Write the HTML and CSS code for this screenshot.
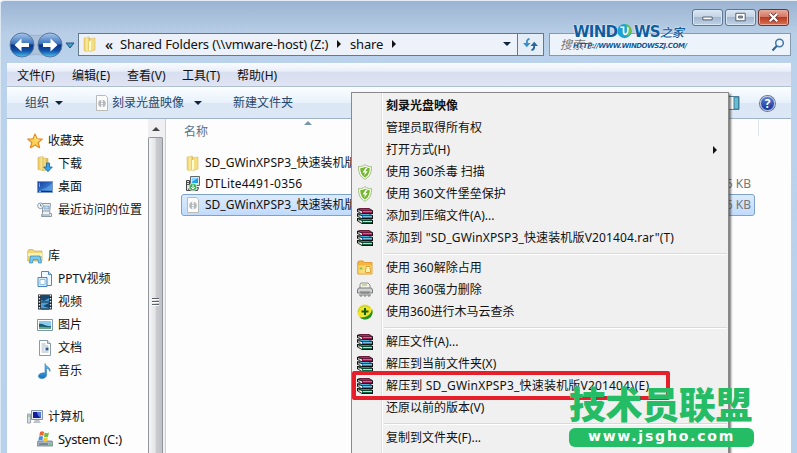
FILE: index.html
```html
<!DOCTYPE html>
<html lang="zh-CN">
<head>
<meta charset="utf-8">
<title>share</title>
<link rel="stylesheet" href="styles.css">
</head>
<body>
<svg class="defs" aria-hidden="true">
  <defs>
    <linearGradient id="gold" x1="0" x2="1"><stop offset="0" stop-color="#e9c558"/><stop offset=".5" stop-color="#fcf0a8"/><stop offset="1" stop-color="#d9ae3c"/></linearGradient>
    <linearGradient id="orb" x1="0" y1="0" x2="0" y2="1"><stop offset="0" stop-color="#a9c8ea"/><stop offset=".45" stop-color="#3a73bf"/><stop offset=".5" stop-color="#0c3384"/><stop offset=".75" stop-color="#1255ab"/><stop offset="1" stop-color="#4bc6f3"/></linearGradient>
    <linearGradient id="sky" x1="0" y1="0" x2="1" y2="1"><stop offset="0" stop-color="#123c9c"/><stop offset="1" stop-color="#4d9ae8"/></linearGradient>
    <linearGradient id="blue" x1="0" y1="0" x2="0" y2="1"><stop offset="0" stop-color="#69c4f4"/><stop offset="1" stop-color="#1373be"/></linearGradient>
    <symbol id="folder" viewBox="0 0 16 16"><path d="M2 2l5-1 1 1v13l-5 .5-1-1z" fill="url(#gold)" stroke="#e2c671" stroke-width=".6"/><path d="M8 3l5-1v12l-5 1.500z" fill="#f5de80" stroke="#d9b95b" stroke-width=".6"/><path d="M7 5l2-.5v10l-2 .5z" fill="#fffbd5"/></symbol>
    <symbol id="disc" viewBox="0 0 16 16"><path d="M2.500.5h9l2 2v13h-11z" fill="#fbfbfa" stroke="#b9bbb8"/><circle cx="8" cy="8.500" r="3.800" fill="#b4babd"/><circle cx="8" cy="8.500" r="1.500" fill="#fff" stroke="#8f989d" stroke-width=".6"/><path d="M8 4.500v2.500M8 10v2.500" stroke="#fff" stroke-width="1.500"/></symbol>
    <symbol id="star" viewBox="0 0 16 16"><path d="M8 1l2 4.800 5.300.3-4.100 3.400 1.400 5.200L8 11.900l-4.600 2.800 1.400-5.200L.7 6.100 6 5.800z" fill="#ffd25a" stroke="#e98b1c" stroke-width="1.200" stroke-linejoin="round"/><path d="M8 3.500l1 3.200 3 .5" fill="none" stroke="#fff3b1"/></symbol>
    <symbol id="download" viewBox="0 0 16 16"><path d="M1 1.500l5-1v14l-5-1zM6 2l5 .5V14l-5 .5z" fill="url(#gold)" stroke="#d9b95b" stroke-width=".7"/><path d="M9.500 7h3v4h2.800L11 15.700 6.700 11h2.800z" fill="#36a2e8" stroke="#1261aa" stroke-width=".8"/></symbol>
    <symbol id="desktop" viewBox="0 0 16 16"><path d="M.5 2.500h15v11H.5z" fill="url(#sky)" stroke="#7c9bbd"/><path d="M1 11c6 0 10-3 14-7v7z" fill="#69b3ee" opacity=".5"/><path d="M1 12.500h14" stroke="#183354"/><path d="M2 12.500h2" stroke="#77cc6c"/><path d="M2 5h1M2 7h1" stroke="#e9f4ff"/></symbol>
    <symbol id="recent" viewBox="0 0 16 16"><path d="M5.500 1.500h8l-1 10h2v3h-10l1-3z" fill="#edf2f7" stroke="#8b99a6"/><path d="M7 4h5v3H7z" fill="#c0d7ee" stroke="#6689a9" stroke-width=".6"/><path d="M6 9h6M4 13h9" stroke="#8794a1"/><circle cx="3.500" cy="3.800" r="2.800" fill="#f6f9fb" stroke="#8a99a8"/><path d="M3.500 2v2h1.500" fill="none" stroke="#51677a" stroke-width=".7"/></symbol>
    <symbol id="library" viewBox="0 0 16 16"><path d="M.8 3l1-1.500h4L7 3h8v10H.8z" fill="#f1d77a" stroke="#cda94b" stroke-width=".7"/><path d="M1 5h14v3H1z" fill="#fff2af"/><path d="M2.500 15L3.500 8h9.500l1.500 7H11.500l-.5-3.300H6L5.500 15z" fill="#7ac7ed" stroke="#318bbc" stroke-width=".7"/></symbol>
    <symbol id="pptv" viewBox="0 0 16 16"><path d="M4.500.5h7l3 3v11h-10z" fill="#eff8ff" stroke="#5488b6"/><path d="M11.500.5v3h3" fill="#b4daf4" stroke="#5488b6"/><path d="M1 6.500h9v9H1z" fill="#d6edfc" stroke="#4987ba"/><path d="M3 8.500h5v5H3z" fill="#fff" stroke="#7eb1d8" stroke-width=".8"/></symbol>
    <symbol id="video" viewBox="0 0 16 16"><path d="M1 .5h14v15H1z" fill="#202b35"/><path d="M4 1h8v14H4z" fill="#4b9fd4"/><path d="M4 1h8v3L7 7 4 6zM12 9v5l-6-2z" fill="#184770"/><path d="M4 8h8M4 15h8" stroke="#142737"/><path d="M2.500 1v14M13.500 1v14" stroke="#e4ecf1" stroke-width="1.400" stroke-dasharray="1.500 1.500"/></symbol>
    <symbol id="picture" viewBox="0 0 16 16"><path d="M.5 2.500h15v11H.5z" fill="#fff" stroke="#7c98ad"/><path d="M2 4h12v8H2z" fill="#8bcbf0"/><path d="M2 7c4-1 7 3 12 2v3H2z" fill="#175d74"/><path d="M2 10c4-1 8 1 12 0v2H2z" fill="#68a982"/></symbol>
    <symbol id="document" viewBox="0 0 16 16"><path d="M2.500.5h8l3 3v12h-11z" fill="#fff" stroke="#889baa"/><path d="M10.500.5v3h3" fill="#d8e5ef" stroke="#889baa"/><path d="M4.500 4h4M4.500 6h7M4.500 8h3M4.500 10h3M4.500 12h7" stroke="#9db4c8"/><path d="M8.500 7.500h3v3h-3z" fill="#335d87"/></symbol>
    <symbol id="music" viewBox="0 0 16 16"><path d="M8 .5c.5 3 6 3.500 5 8-.5-2-2.300-3-3.500-3.300V12c0 2-2 3.500-4.500 3.500-3 0-4-1.500-3.500-3C2 10.500 5.500 9.500 8 10z" fill="url(#blue)" stroke="#2c7fbb" stroke-width=".6"/></symbol>
    <symbol id="computer" viewBox="0 0 16 16"><path d="M.5 5h3v9h-3z" fill="#d8dcde" stroke="#8b969f" stroke-width=".8"/><path d="M4.500 1.500h11v9h-11z" fill="#e8edf0" stroke="#8295aa"/><path d="M6 3h8v6H6z" fill="#141e9b"/><path d="M10 3h4v6C12 8 10 6 10 3" fill="#527bdf"/><path d="M8 11h4l2 3H6z" fill="#bdc4c9"/><path d="M1 7h2" stroke="#5fb56b"/></symbol>
    <symbol id="drive" viewBox="0 0 16 16"><path d="M1 10h14l.8 2v3H.2v-3z" fill="#aab6bd" stroke="#5d707e" stroke-width=".7"/><path d="M2 13h9" stroke="#485c67"/><path d="M12 13h2" stroke="#45d767" stroke-width="1.500"/><path d="M3 1c2-1 3-1 4 0L6.300 5c-1-1-2.500-1-4 0z" fill="#ed6330"/><path d="M7.600 1.500c2 1 3 .7 4.400 0L11 5.700c-1.500.8-3 .5-4 0z" fill="#78b73a"/><path d="M2 5.700c2-1 3-.8 4 0l-.6 4c-1-1-2.600-1-4 0z" fill="#448ede"/><path d="M6.700 6.300c2 .8 3 .7 4.200 0l-.7 4c-1.500.8-3 .7-4.200 0z" fill="#f5c635"/></symbol>
    <symbol id="setup" viewBox="0 0 16 16"><path d="M5.500.5h9v9h-9z" fill="#e1e2df" stroke="#626669"/><path d="M7 2h6v5H7z" fill="#1da0e2"/><path d="M7 2h6L7 6z" fill="#85d7ff"/><path d="M1.500 4.500h3v10h-3z" fill="#e5e5e1" stroke="#444"/><path d="M2 6.500h2M2 8.500h2" stroke="#555"/><path d="M4.500 11.500h9l-1 3h-9z" fill="#d5d8ce" stroke="#444"/><circle cx="8" cy="11" r="3.800" fill="#3caf56" stroke="#eef7ed" stroke-width=".7"/><path d="M8 8.500v4.500M6 11l2 2 2-2" fill="none" stroke="#fff"/></symbol>
    <symbol id="shield" viewBox="0 0 16 16"><path d="M8 .7c2 1.500 4 2 6.500 2 0 6-1.500 10-6.500 12.600C3 12.700 1.500 8.700 1.500 2.700 4 2.700 6 2.200 8 .7z" fill="#f8fbef" stroke="#a3bd82"/><path d="M8 2.700c1.500 1 3 1.400 4.800 1.500-.2 4.500-1.500 7.300-4.800 9.300-3.300-2-4.600-4.800-4.800-9.300C5 4.100 6.500 3.700 8 2.700z" fill="#71b82b"/><path d="M8.500 4L5.500 8.500H8L7 12l3.700-4.700H8.300L10.500 4z" fill="#fff"/></symbol>
    <symbol id="rar" viewBox="0 0 16 16">
      <path d="M0 10l11 0 5 2v4H5l-5-3z" fill="#111"/><path d="M1 10.500h10l4 1.500H5z" fill="#239c78"/><path d="M1 11.300l4 1.700v2l-4-2z" fill="#eef0df"/><path d="M5 12.500h10v2.300H5z" fill="#078058"/><path d="M6 13.500h9" stroke="#d5ffea" stroke-width=".8"/>
      <path d="M0 5.300h11l5 2V11H5L0 8.500z" fill="#111"/><path d="M1 5.700h10l4 1.600H5z" fill="#44b8d8"/><path d="M1 6.500l4 1.800v2l-4-2z" fill="#f1efe5"/><path d="M5 7.600h10v2.400H5z" fill="#2862ad"/><path d="M6 8.700h9" stroke="#a6eeff" stroke-width=".8"/>
      <path d="M0 1L3 0h9l4 2.500V6H5L0 3.800z" fill="#181018"/><path d="M3 .5h8.500l3.500 2H5L1.500 1z" fill="#c02460"/><path d="M1 1.700L5 3.500v1.800L1 3.600z" fill="#f5efe9"/><path d="M5 3h10v2.200H5z" fill="#970f43"/><path d="M6 3.600h9" stroke="#f598b8" stroke-width=".7"/>
      <path d="M2 2.200v2M2 7v1.800M2 11.800v1.800" stroke="#3a3131" stroke-width=".8"/>
    </symbol>
    <symbol id="unlock" viewBox="0 0 16 16"><path d="M.8 2l1-1H6l1.500 1.500H15V14H.8z" fill="#f7b53d" stroke="#e39c30"/><path d="M1.500 5.500h13v8h-13z" fill="#ffdb76"/><path d="M9 9V6.500h4V9h.5v3.500H8.500V9z" fill="#fff4b6" stroke="#e0a63a"/><path d="M2.500 7.500h3v2h-3z" fill="#8ac24d"/></symbol>
    <symbol id="shredder" viewBox="0 0 16 16"><path d="M4 1h7l2 2v4H3V2z" fill="#f4f3e9" stroke="#8d918c"/><path d="M5 3h5" stroke="#a2b26c"/><path d="M1.500 6h13l1 2v3H.5V8z" fill="#d0d2d2" stroke="#777b7c"/><path d="M3 10h10" stroke="#6d7274"/><path d="M3 12v2h2v-3m2 0v3h2v-3m2 0v3h2v-2" fill="none" stroke="#777"/></symbol>
    <symbol id="plus" viewBox="0 0 16 16"><circle cx="8" cy="8" r="7.600" fill="#f0e32a"/><path d="M2.500 13.200A7.600 7.600 0 0 0 15 5C14.500 11 8 14.500 2.500 13.200" fill="#1f8e25"/><path d="M1 8a7 7 0 0 1 12-4" fill="none" stroke="#b9d03a" stroke-width="1"/><path d="M8 4v7M4.500 7.500h7" stroke="#145c10" stroke-width="2"/></symbol>
  </defs>
</svg>

<main class="window">
  <header class="titlebar">
    <nav class="nav">
      <svg class="orbs" viewBox="0 0 70 28"><path d="M14 2.500q14 4 28 0v23q-14-4-28 0z" fill="#a3b8d0" stroke="#8ba3bf" opacity=".6"/><circle cx="14" cy="14" r="12" fill="url(#orb)" stroke="#5b789f"/><circle cx="42" cy="14" r="12" fill="url(#orb)" stroke="#5b789f"/><path d="M6.500 14l7-6.500v4.500h7.500v4h-7.500v4.500z" fill="#fff"/><path d="M49.500 14l-7-6.500v4.500h-7.500v4h7.500v4.500z" fill="#fff"/><path d="M58 12h8l-4 5z" fill="#459bc6" stroke="#1e5685"/></svg>
    </nav>
    <div class="address">
      <svg class="icon wide"><use href="#folder"/></svg>
      <span class="chev">«</span>
      <span class="crumb">Shared Folders (\\vmware-host) (Z:)</span>
      <i class="tri-right"></i>
      <span class="crumb share">share</span>
      <i class="tri-right"></i>
      <i class="tri-down push"></i>
    </div>
    <div class="refresh"><svg viewBox="0 0 16 14"><path d="M7 1Q3.800 1.500 4 6" fill="none" stroke="#3b8cc4" stroke-width="2"/><path d="M0 5.500h8L4 10z" fill="#3b8cc4"/><path d="M9 13q3.200-.5 3-5" fill="none" stroke="#28679d" stroke-width="2"/><path d="M8 8.500h8L12 4z" fill="#28679d"/></svg></div>
    <div class="search"><span>搜索 s</span><svg viewBox="0 0 14 14"><circle cx="8.500" cy="5" r="3.800" fill="#edf6ff" stroke="#4377a8" stroke-width="1.500"/><path d="M5.700 8L1.500 12.500" stroke="#32638f" stroke-width="2"/></svg></div>
  </header>
  <div class="controls">
    <span class="ctl"><svg viewBox="0 0 30 16"><path d="M10 7.500h10v3H10z" fill="#fff" stroke="#4d5968"/></svg></span>
    <span class="ctl"><svg viewBox="0 0 30 16"><path d="M10 3.500h10v8H10z" fill="#fff" stroke="#4d5968"/><path d="M13 6.500h4v2h-4z" fill="#adc0d5" stroke="#4d5968"/></svg></span>
    <span class="ctl close"><svg viewBox="0 0 30 16"><path d="M11 4l8 8M19 4l-8 8" stroke="#5b2a2a" stroke-width="4"/><path d="M11 4l8 8M19 4l-8 8" stroke="#fff" stroke-width="2.500"/></svg></span>
  </div>
  <div class="brand">
    <div class="brand-name"><b>WIND</b><svg viewBox="0 0 16 16"><circle cx="8" cy="8" r="7.600" fill="#1aa3d4"/><path d="M8 .4A7.600 7.600 0 0 1 15.600 8C15 11 13 13 10 13.500 14 9 12 4 8 .4" fill="#6cc24a"/><path d="M3.500 4h3.500v5q0 2.500 2 2.500T11.500 8V4" fill="none" stroke="#fff" stroke-width="1.800"/></svg><b class="ws">WS</b><i>之家</i></div>
    <div class="brand-url">HTTP://WWW.WINDOWSZJ.COM/</div>
  </div>

  <nav class="menubar"><span>文件(F)</span><span>编辑(E)</span><span>查看(V)</span><span>工具(T)</span><span>帮助(H)</span></nav>
  <div class="toolbar">
    <span>组织</span><i class="tri-down t1"></i>
    <svg class="icon"><use href="#disc"/></svg><span>刻录光盘映像</span><i class="tri-down t2"></i>
    <span>新建文件夹</span>
    <svg class="pane push" viewBox="0 0 14 14"><path d="M.5.500h13v13H.5z" fill="#fff" stroke="#567f9c"/><path d="M8.500 1h4.500v12H8.500z" fill="#64bdd2" stroke="#3f7f99"/></svg>
    <span class="help">?</span>
  </div>

  <section class="body">
    <aside class="tree">
      <div class="node root"><svg class="icon"><use href="#star"/></svg>收藏夹</div>
      <div class="node"><svg class="icon"><use href="#download"/></svg>下载</div>
      <div class="node"><svg class="icon"><use href="#desktop"/></svg>桌面</div>
      <div class="node"><svg class="icon"><use href="#recent"/></svg>最近访问的位置</div>
      <div class="node root spaced"><svg class="icon"><use href="#library"/></svg>库</div>
      <div class="node"><svg class="icon"><use href="#pptv"/></svg>PPTV视频</div>
      <div class="node"><svg class="icon"><use href="#video"/></svg>视频</div>
      <div class="node"><svg class="icon"><use href="#picture"/></svg>图片</div>
      <div class="node"><svg class="icon"><use href="#document"/></svg>文档</div>
      <div class="node"><svg class="icon"><use href="#music"/></svg>音乐</div>
      <div class="node root spaced"><svg class="icon"><use href="#computer"/></svg>计算机</div>
      <div class="node drive"><svg class="icon"><use href="#drive"/></svg>System (C:)</div>
    </aside>
    <div class="scroll"><i class="tri-up"></i><div class="thumb"><i></i><i></i><i></i></div></div>
    <div class="files">
      <div class="heading"><span>名称</span><i class="sort"></i><i class="col-end push"></i></div>
      <div class="file"><svg class="icon"><use href="#folder"/></svg><span class="fname">SD_GWinXPSP3_快速装机版</span></div>
      <div class="file"><svg class="icon"><use href="#setup"/></svg><span class="fname dt">DTLite4491-0356</span><span class="size">5 KB</span></div>
      <div class="file selected"><svg class="icon"><use href="#disc"/></svg><span class="fname">SD_GWinXPSP3_快速装机版</span><span class="size">6 KB</span></div>
    </div>
  </section>

  <div class="context">
    <div class="item"><b>刻录光盘映像</b></div>
    <div class="item"><span>管理员取得所有权</span></div>
    <div class="item"><span>打开方式(H)</span><i class="tri-right push"></i></div>
    <div class="item"><svg class="icon"><use href="#shield"/></svg><span>使用 360杀毒 扫描</span></div>
    <div class="item"><svg class="icon"><use href="#shield"/></svg><span>使用 360文件堡垒保护</span></div>
    <div class="item"><svg class="icon"><use href="#rar"/></svg><span>添加到压缩文件(A)...</span></div>
    <div class="item"><svg class="icon"><use href="#rar"/></svg><span class="add">添加到 "SD_GWinXPSP3_快速装机版V201404.rar"(T)</span></div>
    <hr>
    <div class="item"><svg class="icon"><use href="#unlock"/></svg><span>使用 360解除占用</span></div>
    <div class="item"><svg class="icon"><use href="#shredder"/></svg><span>使用 360强力删除</span></div>
    <div class="item"><svg class="icon"><use href="#plus"/></svg><span>使用360进行木马云查杀</span></div>
    <hr>
    <div class="item"><svg class="icon"><use href="#rar"/></svg><span>解压文件(A)...</span></div>
    <div class="item"><svg class="icon"><use href="#rar"/></svg><span>解压到当前文件夹(X)</span></div>
    <div class="item"><svg class="icon"><use href="#rar"/></svg><span class="extract">解压到 SD_GWinXPSP3_快速装机版V201404\(E)</span></div>
    <div class="item"><span>还原以前的版本(V)</span></div>
    <hr>
    <div class="item"><span>复制到文件夹(F)...</span></div>
  </div>
  <div class="marker"></div>
  <div class="stamp"><div class="stamp-name">技术员联盟</div><div class="stamp-url">www.jsgho.com</div></div>
</main>
</body>
</html>
```
FILE: styles.css
```css
* { box-sizing: border-box; }
body { margin: 0; overflow: hidden; font: 12px/20px "Noto Sans", "Noto Sans CJK SC", sans-serif; color: #111; }
.defs { position: absolute; width: 0; height: 0; }
.window { position: relative; width: 797px; height: 453px; overflow: hidden; padding: 0 6px 0 7px; background: linear-gradient(#9bb4d2 0, #b9cfe7 34px, #bad2ec 63px, #b9d1ea 100%); border-top: 1px solid #e4edf5; box-shadow: inset 1px 0 #dbe8f4; border-radius: 4px 0 0 0; display: flex; flex-direction: column; }
.icon { width: 16px; height: 16px; flex: none; }
.push { margin-left: auto !important; }
.titlebar { height: 62px; flex: none; display: flex; align-items: flex-start; padding-top: 32px; }
.nav { width: 70px; margin-left: 1px; }
.orbs { display: block; width: 70px; height: 28px; margin-top: -2px; }
.address { width: 440px; height: 23px; display: flex; align-items: center; background: #edf2fa; border: 1px solid #64798f; padding: 0 0 1px 3px; white-space: nowrap; font-size: 13px; }
.chev { width: 16px; margin-left: 3px; text-align: center; font-weight: 500; line-height: 16px; font-size: 15px; }
.crumb { margin-left: 3px; letter-spacing: -.16px; width: 208px; }
.share { width: 33px; margin-left: 9px; }
.tri-right { width: 0; height: 0; border: 4px solid transparent; border-left: 4px solid #111; border-right: 0; margin-left: 9px; }
.tri-down { width: 0; height: 0; border: 4px solid transparent; border-top: 4px solid #10243c; border-bottom: 0; margin-right: 6px; }
.refresh { width: 26px; height: 23px; border: 1px solid #64798f; border-left: 0; background: #e5edf7; display: grid; place-items: center; }
.refresh svg { width: 15px; height: 13px; }
.search { width: 242px; height: 23px; margin-left: 5px; border: 1px solid #8799ad; background: #edf3fb; display: flex; align-items: center; justify-content: space-between; padding: 0 5px 0 10px; font-style: italic; color: #777; }
.search svg { width: 14px; height: 14px; }
.controls { position: absolute; left: 692px; top: 8px; display: flex; gap: 2px; }
.ctl { width: 31px; height: 17px; border: 1px solid #60758f; border-radius: 3px; background: linear-gradient(#dce7f2, #c2d2e3 48%, #a4b9d1 50%, #bed2e7); box-shadow: inset 0 0 0 1px #d9e6f3; }
.ctl svg { display: block; width: 29px; height: 15px; }
.close { background: linear-gradient(#e6a99a, #d37562 48%, #bb3b20 50%, #d77255); border-color: #70352e; box-shadow: inset 0 0 0 1px #e9aa9b; }
.brand { position: absolute; left: 573px; top: 21px; color: #0e5d9f; }
.brand-name { display: flex; height: 19px; align-items: center; font: 15px/18px "DejaVu Sans", sans-serif; }
.brand-name b { width: 44px; letter-spacing: -.7px; text-shadow: 0 0 2px #fff, 0 0 1px #fff; }
.brand-name .ws { width: 26px; margin-left: 2px; }
.brand-name svg { width: 15px; height: 16px; margin-top: -2px; }
.brand-name i { font: italic 500 12px/18px "Noto Sans CJK SC", sans-serif; letter-spacing: -.3px; text-shadow: 0 0 2px #fff; }
.brand-url { font: italic bold 7px/8px "DejaVu Sans", sans-serif; letter-spacing: -.48px; white-space: nowrap; margin-top: 1px; text-shadow: 0 0 1px #fff, 0 0 2px #fff; }
.menubar { height: 24px; flex: none; display: flex; align-items: center; background: linear-gradient(#fafcff, #e9eef8 35%, #d7dff0 40%, #e0e4f3); border-bottom: 1px solid #aebfd2; padding-left: 10px; padding-top: 3px; }
.menubar span { width: 55px; letter-spacing: .03px; }
.toolbar { height: 32px; flex: none; display: flex; align-items: center; color: #29466b; background: linear-gradient(#fafdff, #e8f1fb 48%, #dce7f5 52%, #dce8f6); border-top: 1px solid #fff; border-bottom: 1px solid #9fb2c8; padding: 0 16px 0 18px; }
.t1 { margin: 0 31px 0 6px; }
.toolbar .icon { margin-right: 2px; }
.toolbar .t2 { margin: 0 31px 0 10px; }
.pane { width: 15px; height: 14px; margin-right: 20px; }
.help { width: 15px; height: 15px; border-radius: 50%; background: linear-gradient(#5b7fd0, #173397); border: 1px solid #aebbdc; box-shadow: 0 0 0 1px #65779d; color: #fff; font: bold 12px/13px "Open Sans", sans-serif; text-align: center; }
.body { flex: 1; min-height: 0; display: flex; background: #fdfdfe; }
.tree { width: 141px; padding-top: 10px; overflow: hidden; }
.node { height: 23px; display: flex; align-items: center; gap: 5px; padding-left: 30px; white-space: nowrap; }
.root { padding-left: 20px; }
.spaced { margin-top: 23px; }
.drive { font-size: 13px; letter-spacing: -.3px; line-height: 18px; padding-bottom: 2px; }
.scroll { width: 18px; display: flex; flex-direction: column; align-items: flex-start; background: #f0f0f2; border-right: 1px solid #c8d0db; }
.tri-up { width: 0; height: 0; border: 4px solid transparent; border-bottom: 4px solid #444; border-top: 0; margin: 8px 0 6px 4px; }
.thumb { flex: 1; width: 15px; border: 1px solid #93959b; border-bottom: 0; border-radius: 2px 2px 0 0; background: linear-gradient(90deg, #f5f5f6, #e3e4e6 48%, #c9cbd0 55%, #bfc1c8); display: flex; flex-direction: column; align-items: center; gap: 2px; padding-top: 160px; }
.thumb i { width: 7px; height: 1px; background: #5c6068; box-shadow: 0 1px #fff; }
.files { flex: 1; min-width: 0; padding: 0 36px 0 15px; }
.heading { height: 33px; display: flex; color: #5d6f86; padding: 3px 0 0 3px; }
.sort { width: 0; height: 0; border: 4px solid transparent; border-bottom: 4px solid #7995ad; border-top: 0; margin-left: 96px; margin-top: -1px; }
.col-end { width: 1px; height: 17px; margin-top: -3px; margin-right: -4px; background: #e1e6ee; }
.file { height: 21px; display: flex; align-items: center; gap: 4px; padding-left: 3px; border: 1px solid transparent; border-radius: 3px; white-space: nowrap; }
.dt { letter-spacing: .2px; }
.size { margin-left: auto; padding-right: 3px; color: #777; }
.selected { background: linear-gradient(#dcebfc, #c1dbfc); border-color: #7da2ce; height: 22px; }
.context { position: absolute; left: 351px; top: 91px; width: 378px; height: 372px; border: 1px solid #8a8a8a; background: linear-gradient(90deg, transparent 29px, #dedede 29px, #dedede 30px, #fff 30px, #fff 31px, transparent 31px), #f0f0f0; box-shadow: 2px 2px 2px rgba(50, 50, 50, .65); padding: 2px 1px; }
.item { height: 22px; display: flex; align-items: center; padding-left: 33px; white-space: nowrap; padding-right: 10px; }
.item .icon { margin: 0 13px 0 -29px; }
.add { letter-spacing: .14px; }
.extract { letter-spacing: .18px; }
.context hr { height: 2px; border: 0; margin: 4px 0 2px 31px; background: linear-gradient(#d9d9d9 50%, #fff 50%); }
.marker { position: absolute; left: 352px; top: 370px; width: 318px; height: 29px; border: 4px solid #e5202b; border-radius: 2px; }
.stamp { position: absolute; left: 569px; top: 380px; width: 185px; color: #24bd65; }
.stamp-name { height: 44px; font: 900 37px/44px "Noto Sans CJK SC", sans-serif; letter-spacing: -.4px; white-space: nowrap; }
.stamp-url { height: 19px; margin-top: 3px; border-radius: 6px; background: #24bd65; color: #fff; font: bold 14px/17px "DejaVu Sans", sans-serif; letter-spacing: 1.8px; text-align: center; }
```
